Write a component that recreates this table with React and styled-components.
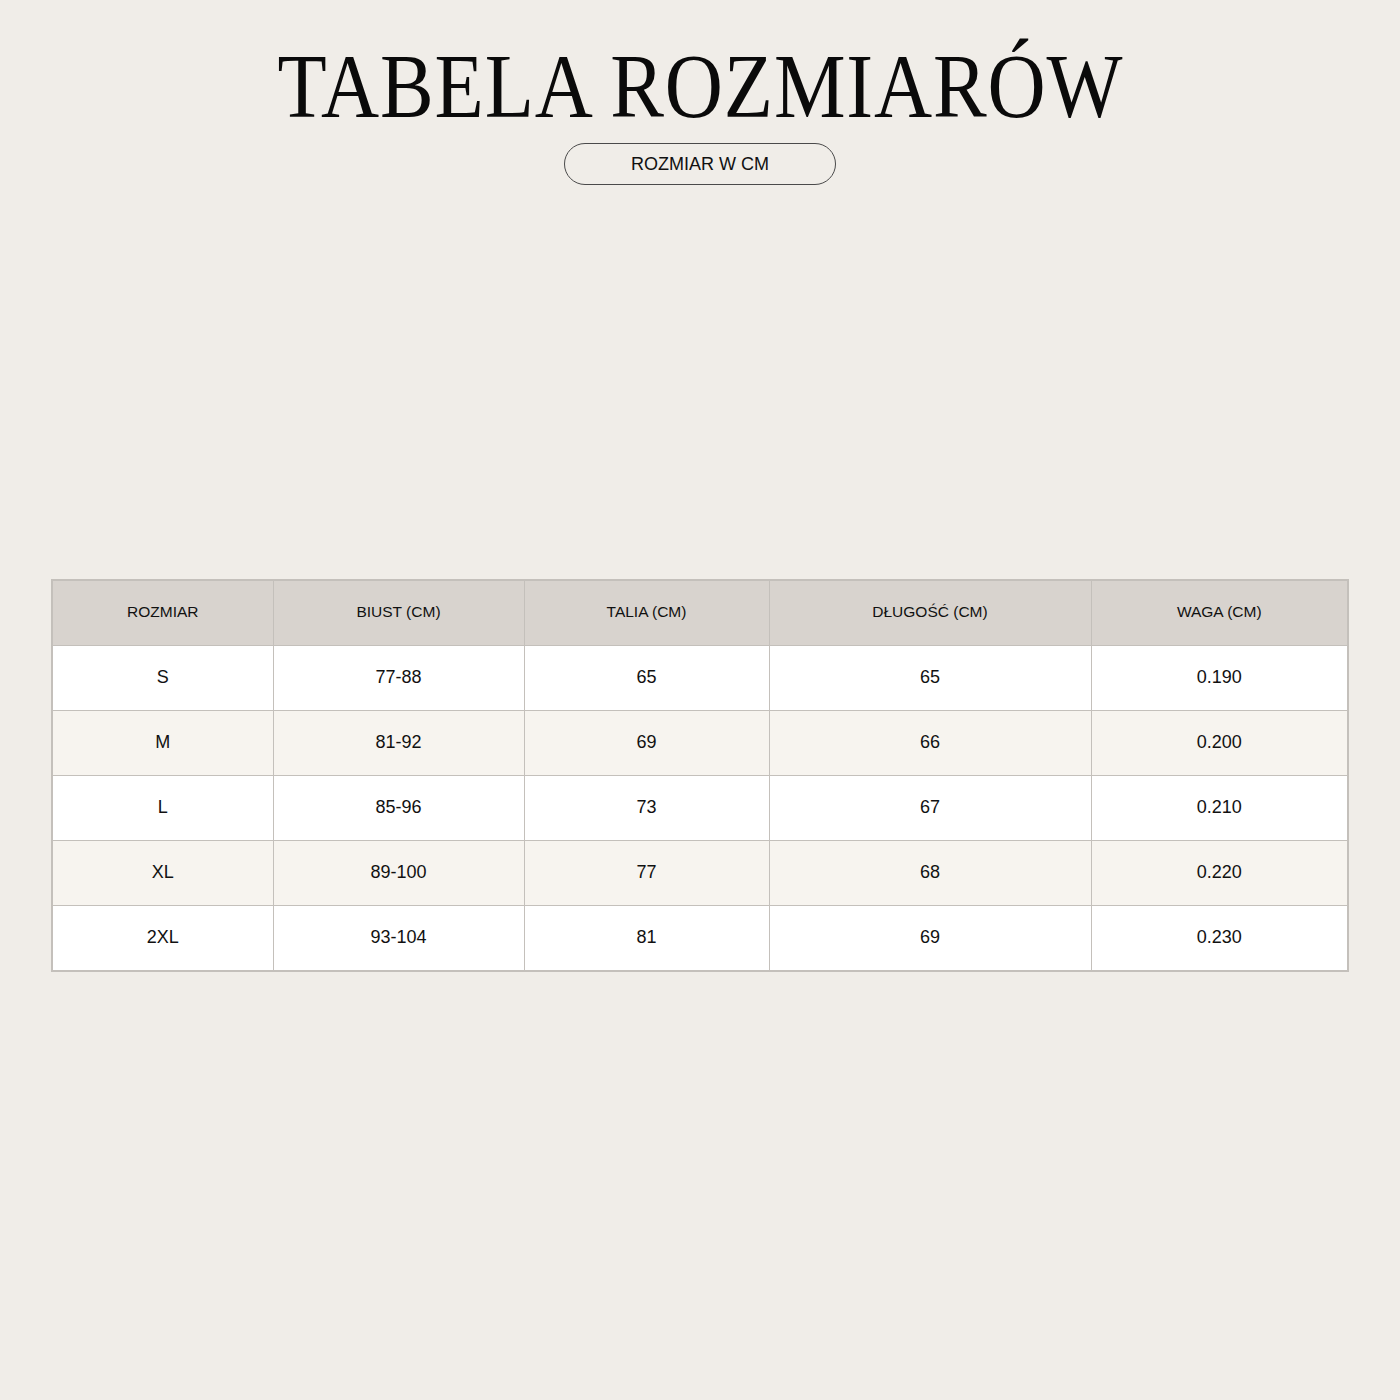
import React from "react";
import styled, { createGlobalStyle } from "styled-components";

const Global = createGlobalStyle`
  html, body { margin: 0; padding: 0; }
  body { background: #f0ede8; font-family: "Liberation Sans", Arial, sans-serif; color: #111; }
`;

const Page = styled.div`
  width: 1400px;
  height: 1400px;
  box-sizing: border-box;
  padding: 40px 52px 0;
  display: flex;
  flex-direction: column;
  align-items: center;
`;

const Title = styled.h1`
  margin: 0;
  font-family: "Liberation Serif", "Times New Roman", serif;
  font-weight: 400;
  font-size: 92px;
  line-height: 92px;
  letter-spacing: 1px;
  color: #0a0a0a;
  transform: scaleX(0.875);
  white-space: nowrap;
`;

const Pill = styled.div`
  margin-top: 11px;
  width: 272px;
  height: 42px;
  box-sizing: border-box;
  border: 1px solid #4a4a4a;
  border-radius: 21px;
  display: flex;
  align-items: center;
  justify-content: center;
  font-size: 18px;
  color: #111;
`;

const Table = styled.table`
  margin-top: 394px;
  width: 1296px;
  border-collapse: collapse;
  table-layout: fixed;
  border: 2px solid #c4c0bb;
`;

const Th = styled.th`
  height: 62px;
  background: #d8d3ce;
  border: 1px solid #c4c0bb;
  font-weight: 400;
  font-size: 15.5px;
  color: #111;
  text-align: center;
  padding: 0 0 2px;
`;

const Row = styled.tr`
  background: ${(p) => (p.$alt ? "#f7f4ef" : "#ffffff")};
`;

const Td = styled.td`
  height: 62px;
  border: 1px solid #c4c0bb;
  font-size: 18px;
  color: #111;
  text-align: center;
  padding: 0 0 2px;
`;

const cols = [221, 251, 245, 322, 257];
const headers = ["ROZMIAR", "BIUST (CM)", "TALIA (CM)", "DŁUGOŚĆ (CM)", "WAGA (CM)"];
const rows = [
  ["S", "77-88", "65", "65", "0.190"],
  ["M", "81-92", "69", "66", "0.200"],
  ["L", "85-96", "73", "67", "0.210"],
  ["XL", "89-100", "77", "68", "0.220"],
  ["2XL", "93-104", "81", "69", "0.230"],
];

export default function App() {
  return (
    <>
      <Global />
      <Page>
        <Title>TABELA ROZMIARÓW</Title>
        <Pill>ROZMIAR W CM</Pill>
        <Table>
          <colgroup>
            {cols.map((w, i) => (
              <col key={i} style={{ width: w }} />
            ))}
          </colgroup>
          <thead>
            <tr>
              {headers.map((h) => (
                <Th key={h}>{h}</Th>
              ))}
            </tr>
          </thead>
          <tbody>
            {rows.map((r, i) => (
              <Row key={r[0]} $alt={i % 2 === 1}>
                {r.map((c, j) => (
                  <Td key={j}>{c}</Td>
                ))}
              </Row>
            ))}
          </tbody>
        </Table>
      </Page>
    </>
  );
}
